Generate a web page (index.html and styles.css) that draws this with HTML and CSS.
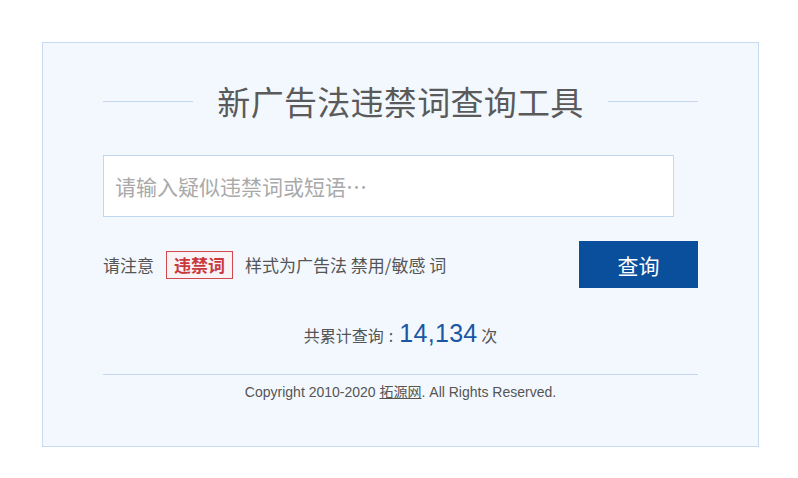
FILE: index.html
```html
<!DOCTYPE html>
<html lang="zh">
<head>
<meta charset="utf-8">
<title>新广告法违禁词查询工具</title>
<link rel="stylesheet" href="styles.css">
</head>
<body>
<div class="card">
  <div class="title-row">
    <span class="rule"></span>
    <h1 class="title">新广告法违禁词查询工具</h1>
    <span class="rule"></span>
  </div>
  <div class="search-box">
    <input class="search-input" type="text" placeholder="请输入疑似违禁词或短语…">
  </div>
  <div class="action-row">
    <div class="notice">
      <span>请注意</span>
      <span class="badge">违禁词</span>
      <span>样式为广告法 禁用/敏感 词</span>
    </div>
    <button class="query-btn">查询</button>
  </div>
  <div class="count">共累计查询<span class="colon">:</span><span class="count-num">14,134</span> 次</div>
  <div class="footer">Copyright 2010-2020 <a class="site" href="#">拓源网</a>. All Rights Reserved.</div>
</div>
</body>
</html>
```
FILE: styles.css
```css
html, body {
  margin: 0;
  padding: 0;
  background: #ffffff;
}
body {
  font-family: "Noto Sans CJK SC", "Liberation Sans", sans-serif;
  color: #555555;
}
.card {
  box-sizing: border-box;
  margin: 42px 0 0 42px;
  width: 717px;
  height: 405px;
  border: 1px solid #c8daf2;
  background: #f2f8fd;
  padding: 38px 60px 0 60px;
}
.title-row {
  display: flex;
  align-items: center;
  justify-content: space-between;
  height: 40px;
}
.rule {
  width: 90px;
  height: 1px;
  background: #c3d6ee;
}
.title {
  margin: 0;
  font-size: 33px;
  font-weight: normal;
  line-height: 40px;
  color: #5a5a5a;
  letter-spacing: 0.3px;
}
.search-box {
  margin-top: 34px;
  width: 571px;
}
.search-input {
  box-sizing: border-box;
  display: block;
  width: 571px;
  height: 62px;
  border: 1px solid #c3d6f0;
  background: #ffffff;
  padding: 0 11px;
  font-family: "Noto Sans CJK SC", sans-serif;
  font-size: 21px;
  color: #555555;
  outline: none;
}
.search-input::placeholder {
  color: #a9a9a9;
}
.action-row {
  margin-top: 24px;
  display: flex;
  align-items: center;
  justify-content: space-between;
}
.notice {
  display: flex;
  align-items: center;
  font-size: 17px;
  color: #555555;
}
.badge {
  box-sizing: border-box;
  height: 28px;
  line-height: 26px;
  padding: 0 7px;
  margin: 0 12px;
  border: 1px solid #d0494d;
  color: #c8383d;
  font-weight: bold;
  background: #f9f3f5;
}
.query-btn {
  width: 119px;
  height: 47px;
  border: none;
  background: #0a4f9c;
  color: #ffffff;
  font-family: "Noto Sans CJK SC", sans-serif;
  font-size: 21px;
  padding: 0;
  cursor: pointer;
}
.count {
  margin-top: 30px;
  text-align: center;
  font-size: 16px;
  line-height: 30px;
  color: #555555;
}
.colon {
  display: inline-block;
  margin: 0 6px 0 5px;
}
.count-num {
  font-family: "Liberation Sans", sans-serif;
  font-size: 25px;
  color: #1a56a3;
  letter-spacing: 0.3px;
}
.footer {
  margin-top: 24px;
  border-top: 1px solid #c3d6ee;
  padding-top: 7px;
  text-align: center;
  font-family: "Liberation Sans", "Noto Sans CJK SC", sans-serif;
  font-size: 14px;
  line-height: 20px;
  color: #555555;
}
.site {
  color: #555555;
  text-decoration: underline;
}
```
